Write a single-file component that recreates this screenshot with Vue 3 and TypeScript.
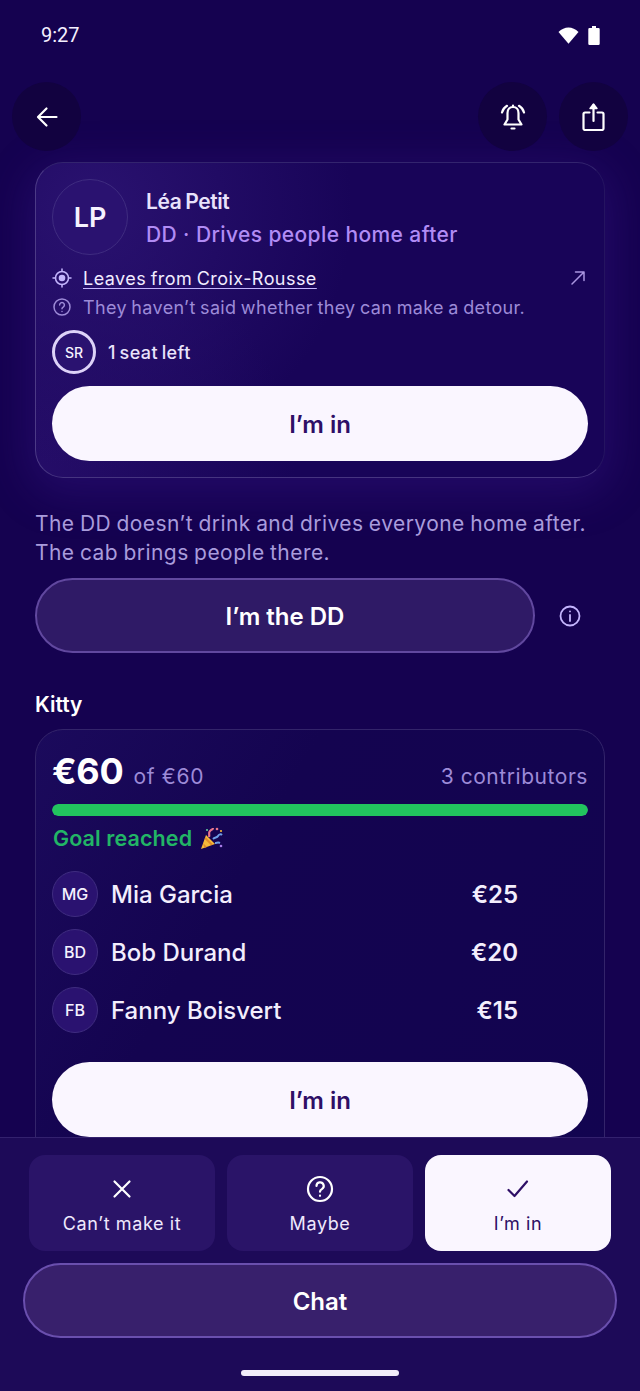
<script setup lang="ts">
type Contributor = { initials: string; name: string; amount: string };

const contributors: Contributor[] = [
  { initials: "MG", name: "Mia Garcia", amount: "€25" },
  { initials: "BD", name: "Bob Durand", amount: "€20" },
  { initials: "FB", name: "Fanny Boisvert", amount: "€15" },
];
</script>

<template>
  <div class="screen">
    <div class="status">
      <span class="clock">9:27</span>
      <div class="status-icons">
        <svg width="21" height="17" viewBox="0 0 21 17"><path d="M0.500 5C3.500 2 6.800 0.500 10.500 0.500S17.500 2 20.500 5L10.500 16.800z" fill="#fff" /></svg>
        <svg width="12" height="19" viewBox="0 0 12 19"><path d="M4 0h4v2h2.500a1.200 1.200 0 0 1 1.200 1.200v14.600a1.200 1.200 0 0 1-1.200 1.200h-9a1.200 1.200 0 0 1-1.200-1.200V3.200A1.200 1.200 0 0 1 1.500 2H4z" fill="#fff" /></svg>
      </div>
    </div>

    <div class="topbar">
      <button class="round">
        <svg width="26" height="26" viewBox="0 0 26 26" fill="none" stroke="#fff" stroke-width="2.200" stroke-linecap="round" stroke-linejoin="round"><path d="M22.500 13H4.500M12.500 4.500L4 13l8.500 8.500" /></svg>
      </button>
      <div class="topbar-right">
        <button class="round">
          <svg width="28" height="28" viewBox="0 0 28 28" fill="none" stroke="#fff" stroke-width="2.200" stroke-linecap="round" stroke-linejoin="round"><path d="M14 4c-3.500 0-5.500 2.600-5.500 6v6.500L5.500 21.500h17l-3-5V10c0-3.400-2-6-5.500-6zM14 2.500V4M12.500 25.500h3" /><path d="M8 2.800C5.500 4.300 3.800 6.500 3 9.500M20 2.800c2.500 1.500 4.200 3.700 5 6.700" /></svg>
        </button>
        <button class="round">
          <svg width="23" height="29" viewBox="0 0 23 29" fill="none" stroke="#fff" stroke-width="2.200" stroke-linecap="round" stroke-linejoin="round"><path d="M11.500 19V3" /><path d="M8 6.500L11.500 2 15 6.500z" fill="#fff" stroke-width="1.400" /><path d="M7.500 10.500H3A1.500 1.500 0 0 0 1.500 12v14.500A1.500 1.500 0 0 0 3 28h17a1.500 1.500 0 0 0 1.500-1.500V12a1.500 1.500 0 0 0-1.500-1.500h-4.500" /></svg>
        </button>
      </div>
    </div>

    <div class="content">
      <section class="card driver">
        <div class="person">
          <div class="avatar big">LP</div>
          <div class="person-text">
            <div class="name">Léa Petit</div>
            <div class="role">DD · Drives people home after</div>
          </div>
        </div>
        <div class="line place">
          <svg class="line-icon" width="20" height="20" viewBox="0 0 20 20" fill="none" stroke="#c4b5fd" stroke-width="1.500" stroke-linecap="round"><circle cx="10" cy="10" r="6.500" /><circle cx="10" cy="10" r="3.300" fill="#c4b5fd" stroke="none" /><path d="M10 1v2.500M10 16.500V19M1 10h2.500M16.500 10H19" /></svg>
          <span class="place-text">Leaves from Croix-Rousse</span>
          <svg class="arrow" width="14" height="14" viewBox="0 0 14 14" fill="none" stroke="#a995e0" stroke-width="1.500" stroke-linecap="round" stroke-linejoin="round"><path d="M1 13L13 1M4.500 1H13v8.500" /></svg>
        </div>
        <div class="line hint">
          <svg class="line-icon" width="20" height="20" viewBox="0 0 20 20" fill="none" stroke="#9d8bd8" stroke-width="1.500" stroke-linecap="round"><circle cx="10" cy="10" r="8" /><path d="M7.600 8a2.400 2.400 0 1 1 3.600 2.100c-.8.500-1.200.9-1.200 1.700M10 14.500v.1" /></svg>
          <span>They haven’t said whether they can make a detour.</span>
        </div>
        <div class="seat">
          <div class="avatar seat-avatar">SR</div>
          <span>1 seat left</span>
        </div>
        <button class="pill light">I’m in</button>
      </section>

      <p class="explain">The DD doesn’t drink and drives everyone home after.<br />The cab brings people there.</p>

      <div class="dd-row">
        <button class="pill ghost">I’m the DD</button>
        <svg width="24" height="24" viewBox="0 0 24 24" fill="none" stroke="#c4b5fd" stroke-width="1.800" stroke-linecap="round"><circle cx="12" cy="12" r="9.500" /><path d="M12 11v6M12 7.300v.1" /></svg>
      </div>

      <h2 class="section-title">Kitty</h2>

      <section class="card kitty">
        <div class="totals">
          <strong class="amount">€60</strong>
          <span class="goal">of €60</span>
          <span class="count">3 contributors</span>
        </div>
        <div class="bar"><div class="bar-fill" :style="{ width: '100%' }"></div></div>
        <div class="reached">
          <span>Goal reached</span>
          <svg width="24" height="24" viewBox="0 0 24 24">
            <path d="M1 23l5-14 9 9z" fill="#f5b93a" />
            <path d="M3 17l4 4-2.500 1zM5.500 11l7.500 7.500-2 .7-6.300-6.300z" fill="#e08a2a" />
            <path d="M9 11c1-3-1-4 1-6s3-1 3-3" fill="none" stroke="#e8758c" stroke-width="2.200" />
            <path d="M13 13c2-2 4-1 5-3s3-2 4-1M15 17c2 0 3-1 5 0" fill="none" stroke="#6f9fe8" stroke-width="2" />
            <circle cx="17" cy="3" r="1.300" fill="#e8758c" /><circle cx="21" cy="5" r="1.100" fill="#f5b93a" /><circle cx="7" cy="4" r="1.100" fill="#5fc6a0" /><circle cx="21" cy="20" r="1.300" fill="#a77be8" />
          </svg>
        </div>
        <ul class="people">
          <li v-for="c in contributors" :key="c.initials" class="person-row">
            <div class="avatar small">{{ c.initials }}</div>
            <span class="person-name">{{ c.name }}</span>
            <span class="person-amount">{{ c.amount }}</span>
          </li>
        </ul>
        <button class="pill light">I’m in</button>
      </section>
    </div>

    <div class="bottom">
      <div class="tiles">
        <button class="tile">
          <svg width="28" height="28" viewBox="0 0 28 28" fill="none" stroke="#fff" stroke-width="2.200" stroke-linecap="round"><path d="M6.500 6.500l15 15M21.500 6.500l-15 15" /></svg>
          <span>Can’t make it</span>
        </button>
        <button class="tile">
          <svg width="28" height="28" viewBox="0 0 28 28" fill="none" stroke="#fff" stroke-width="2.200" stroke-linecap="round"><circle cx="14" cy="14" r="12" /><path d="M10.500 11a3.600 3.600 0 1 1 5.400 3.100c-1.200.7-1.900 1.300-1.900 2.600M14 20.700v.1" /></svg>
          <span>Maybe</span>
        </button>
        <button class="tile on">
          <svg width="28" height="28" viewBox="0 0 28 28" fill="none" stroke="#2e0f66" stroke-width="2.200" stroke-linecap="round" stroke-linejoin="round"><path d="M4.500 15l6 6L23 6.500" /></svg>
          <span>I’m in</span>
        </button>
      </div>
      <button class="pill ghost chat">Chat</button>
      <div class="home"></div>
    </div>
  </div>
</template>

<style>
html, body {
  margin: 0;
  background: #150250;
}
</style>

<style scoped>
.screen {
  position: relative;
  width: 640px;
  height: 1391px;
  overflow: hidden;
  background: #150250;
  color: #fff;
  font-family: "Inter", "Noto Sans", sans-serif;
}

button {
  font-family: inherit;
  border: none;
  padding: 0;
  cursor: pointer;
}

.status {
  display: flex;
  align-items: center;
  justify-content: space-between;
  height: 70px;
  padding: 0 40px 0 41px;
  box-sizing: border-box;
}

.clock {
  font-family: "Roboto", sans-serif;
  font-size: 20px;
  color: #f4f0ff;
}

.status-icons {
  display: flex;
  align-items: center;
  gap: 9px;
}

.topbar {
  display: flex;
  justify-content: space-between;
  height: 92px;
  padding: 12px 12px 0;
  box-sizing: border-box;
}

.topbar-right {
  display: flex;
  gap: 12px;
}

.round {
  display: flex;
  align-items: center;
  justify-content: center;
  width: 69px;
  height: 69px;
  border-radius: 50%;
  background: #120240;
}

.content {
  padding: 0 35px;
}

.card {
  box-sizing: border-box;
  border-radius: 28px;
  padding: 16px;
  border: 1px solid #3d2a78;
}

.driver {
  height: 316px;
  background:
    radial-gradient(circle at 10% 15%, #2a1270 0%, rgba(42, 18, 112, 0) 45%),
    radial-gradient(circle at 0% 100%, #250d68 0%, rgba(37, 13, 104, 0) 40%),
    #180458;
  box-shadow: 0 10px 44px 6px rgba(72, 32, 165, 0.28);
  border-color: #33246e #251460 #463480 #4c3a86;
}

.person {
  display: flex;
  align-items: center;
  gap: 18px;
}

.avatar {
  display: flex;
  align-items: center;
  justify-content: center;
  flex-shrink: 0;
  box-sizing: border-box;
  border-radius: 50%;
  background: #2a1270;
  border: 1px solid #3f2c80;
  font-weight: 500;
  color: #f6f2ff;
}

.big {
  width: 76px;
  height: 76px;
  font-size: 27px;
  font-weight: 600;
}

.person-text {
  display: flex;
  flex-direction: column;
  gap: 8px;
  margin-top: 4px;
}

.name {
  font-size: 21px;
  font-weight: 600;
  color: #e8e2fb;
  line-height: 24px;
  letter-spacing: -0.4px;
  word-spacing: -1px;
}

.role {
  font-size: 21px;
  font-weight: 500;
  color: #b18cf5;
  line-height: 26px;
  letter-spacing: 0.4px;
}

.line {
  display: flex;
  align-items: center;
  gap: 11px;
  height: 24px;
  font-size: 18px;
  word-spacing: -1px;
}

.place {
  margin-top: 11px;
  color: #f1ecff;
}

.place-text {
  text-decoration: underline;
  text-underline-offset: 3px;
  text-decoration-color: #c4b5fd;
  letter-spacing: 0.45px;
}

.arrow {
  margin-left: auto;
  margin-right: 3px;
}

.hint {
  margin-top: 5px;
  color: #9d8bd8;
  letter-spacing: 0.35px;
}

.seat {
  display: flex;
  align-items: center;
  gap: 12px;
  margin-top: 11px;
  font-size: 18px;
  font-weight: 500;
  color: #e9e3fb;
  letter-spacing: 0.4px;
  word-spacing: -1.5px;
}

.seat-avatar {
  width: 44px;
  height: 44px;
  border: 3px solid #ddd2f8;
  font-size: 14px;
  letter-spacing: 0;
}

.pill {
  display: block;
  width: 100%;
  height: 75px;
  padding-top: 2px;
  border-radius: 38px;
  font-size: 24px;
  font-weight: 600;
}

.light {
  margin-top: 12px;
  background: #faf6ff;
  color: #2e0f66;
}

.explain {
  margin: 31px 0 0;
  font-size: 21px;
  line-height: 29px;
  color: #a99cdc;
  letter-spacing: 0.45px;
  word-spacing: -1px;
  white-space: nowrap;
}

.dd-row {
  display: flex;
  align-items: center;
  gap: 23px;
  margin-top: 11px;
}

.ghost {
  background: #2f1a66;
  border: 2px solid #61489f;
  color: #fff;
  box-sizing: border-box;
}

.dd-row .ghost {
  width: 500px;
}

.section-title {
  margin: 39px 0 0;
  font-size: 21px;
  line-height: 26px;
  font-weight: 600;
}

.kitty {
  margin-top: 11px;
  height: 440px;
  background: linear-gradient(120deg, #1b0a5c 0%, #140450 35%, #120450 100%);
  border-color: #33246a;
}

.totals {
  display: flex;
  align-items: baseline;
  box-sizing: border-box;
  height: 52px;
  padding-top: 3px;
}

.amount {
  font-size: 36px;
  font-weight: 700;
  letter-spacing: -0.3px;
}

.goal {
  margin-left: 10px;
  font-size: 21px;
  color: #9d8bd8;
  letter-spacing: 0.7px;
}

.count {
  margin-left: auto;
  font-size: 21px;
  color: #9d8bd8;
  letter-spacing: 0.55px;
}

.bar {
  height: 12px;
  margin-top: 6px;
  border-radius: 6px;
  background: #2a1470;
  overflow: hidden;
}

.bar-fill {
  height: 100%;
  border-radius: 6px;
  background: #22c45e;
}

.reached {
  display: flex;
  align-items: center;
  gap: 8px;
  height: 26px;
  margin-top: 9px;
  padding-left: 1px;
  font-size: 21.500px;
  font-weight: 600;
  color: #22b566;
  letter-spacing: 0.1px;
}

.people {
  list-style: none;
  margin: 20px 0 0;
  padding: 0;
  display: flex;
  flex-direction: column;
  gap: 12px;
}

.person-row {
  display: flex;
  align-items: center;
  height: 46px;
}

.small {
  width: 46px;
  height: 46px;
  font-size: 16px;
}

.person-name {
  margin-left: 13px;
  font-size: 24px;
  font-weight: 500;
  color: #f3eefd;
}

.person-amount {
  margin-left: auto;
  margin-right: 70px;
  font-size: 24px;
  font-weight: 600;
  color: #f3eefd;
}

.kitty .light {
  margin-top: 29px;
}

.bottom {
  position: absolute;
  left: 0;
  right: 0;
  top: 1137px;
  bottom: 0;
  box-sizing: border-box;
  padding-top: 17px;
  background: #1d0a58;
  border-top: 1px solid #33216e;
}

.tiles {
  display: flex;
  gap: 12px;
  padding: 0 29px;
}

.tile {
  flex: 1;
  height: 96px;
  padding-top: 3px;
  display: flex;
  flex-direction: column;
  align-items: center;
  justify-content: center;
  gap: 10px;
  border-radius: 16px;
  background: #2a1468;
  color: #efe9fd;
  font-size: 18px;
  letter-spacing: 0.6px;
}

.tile.on {
  background: #faf6ff;
  color: #2e0f66;
}

.chat {
  width: 594px;
  margin: 12px auto 0;
  background: #38206c;
  border-color: #6a4fae;
}

.home {
  position: absolute;
  left: 241px;
  top: 232px;
  width: 158px;
  height: 6px;
  border-radius: 3px;
  background: #f2edfa;
}
</style>
